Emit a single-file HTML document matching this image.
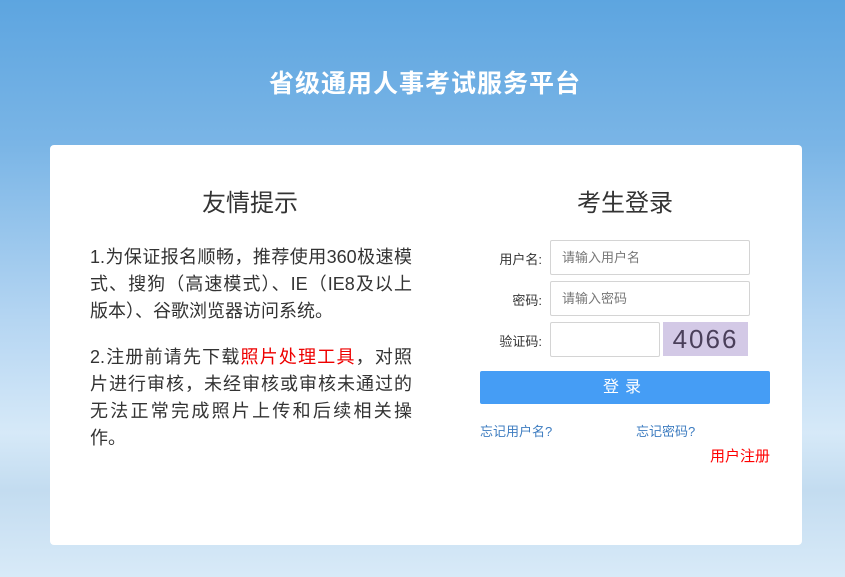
<!DOCTYPE html>
<html><head><meta charset="utf-8"><style>
*{margin:0;padding:0;box-sizing:border-box}
body{width:845px;height:577px;overflow:hidden;font-family:"Liberation Sans","Noto Sans CJK SC",sans-serif;
background:linear-gradient(180deg,#5da5e0 0%,#7ab5e6 25%,#b4d5f2 55%,#d6e9f8 75%,#c3dcf0 85%,#d8eaf8 100%);position:relative}
.h{position:absolute;top:64px;left:0;width:850px;text-align:center;color:#fff;font-size:25px;font-weight:bold;letter-spacing:1px}
.card{position:absolute;left:50px;top:145px;width:752px;height:400px;background:#fff;border-radius:4px}
.t{position:absolute;font-size:24px;color:#333;text-align:center}
.p{position:absolute;left:40px;width:322px;font-size:18px;line-height:27px;color:#333;white-space:nowrap}
.p div{text-align-last:justify;text-align:justify}
.p div.l{text-align-last:left}
.lab{position:absolute;width:80px;text-align:right;font-size:13px;color:#333;left:412px}
.in{position:absolute;left:500px;width:200px;height:35px;border:1px solid #d4d4d4;border-radius:2px;font-size:13px;color:#777;padding:9px 11px;line-height:15px}
.btn{position:absolute;left:430px;top:226px;width:290px;height:33px;background:#459df5;border-radius:2px;color:#fff;font-size:16px;text-align:center;line-height:33px;letter-spacing:6px}
.lk{position:absolute;top:276px;font-size:13px;color:#3d7cc0}
</style></head><body>
<div class="h">省级通用人事考试服务平台</div>
<div class="card">
<div class="t" style="left:0;width:400px;top:38px">友情提示</div>
<div class="p" style="top:99px"><div>1.为保证报名顺畅，推荐使用360极速模</div><div>式、搜狗（高速模式）、IE（IE8及以上</div><div class="l">版本）、谷歌浏览器访问系统。</div></div>
<div class="p" style="top:199px"><div>2.注册前请先下载<span style="color:#e00">照片处理工具</span>，对照</div><div>片进行审核，未经审核或审核未通过的</div><div>无法正常完成照片上传和后续相关操</div><div class="l">作。</div></div>
<div class="t" style="left:430px;width:290px;top:38px">考生登录</div>
<div class="lab" style="top:104px">用户名:</div>
<div class="in" style="top:95px">请输入用户名</div>
<div class="lab" style="top:145px">密码:</div>
<div class="in" style="top:136px">请输入密码</div>
<div class="lab" style="top:186px">验证码:</div>
<div class="in" style="top:177px;width:110px"></div>
<div style="position:absolute;left:613px;top:177px;width:85px;height:34px;background:#d3c9e6;font-family:'Liberation Sans',sans-serif;font-size:26px;color:#4a3f5a;text-align:center;line-height:34px;letter-spacing:2px">4066</div>
<div class="btn">登录</div>
<div class="lk" style="left:430px">忘记用户名?</div>
<div class="lk" style="left:586px">忘记密码?</div>
<div style="position:absolute;right:32px;top:300px;font-size:15px;color:#f00">用户注册</div>
</div>
</body></html>
